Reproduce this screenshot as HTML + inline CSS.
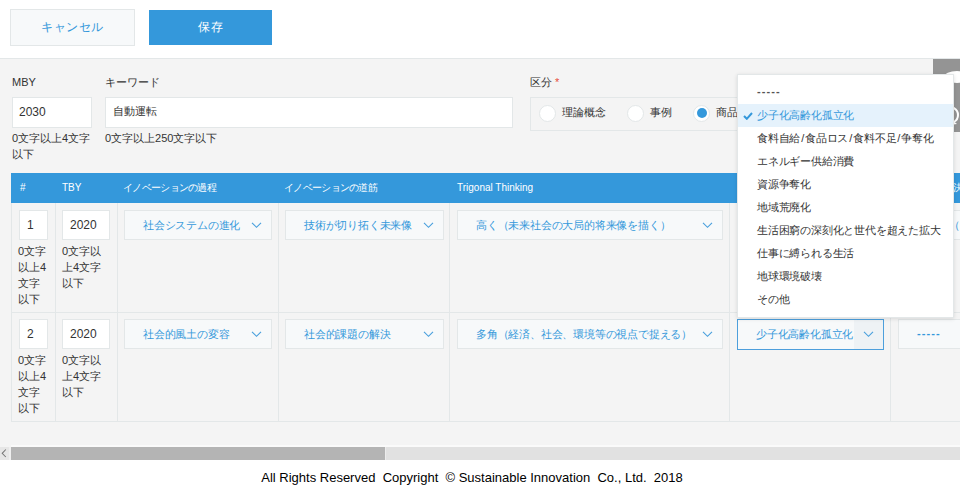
<!DOCTYPE html>
<html><head><meta charset="utf-8">
<style>
*{box-sizing:border-box;margin:0;padding:0}
html,body{width:960px;height:493px;overflow:hidden;background:#fff;font-family:"Liberation Sans",sans-serif;color:#333;white-space:nowrap}
.a{position:absolute}
.btn{position:absolute;text-align:center;font-size:12px;letter-spacing:0.5px}
.cancel{left:10px;top:9px;width:125px;height:37px;background:#f7f9fa;border:1px solid #e3e7e8;color:#3498db;line-height:35px}
.save{left:149px;top:10px;width:123px;height:35px;background:#3498db;color:#fff;line-height:35px}
.main{left:0;top:58px;width:960px;height:389px;background:#f4f4f4;border-top:1px solid #e3e7e8}
.lbl{position:absolute;font-size:11px;color:#333;line-height:16px}
.inp{position:absolute;background:#fff;border:1px solid #e3e7e8;font-size:12px;color:#333;line-height:28px}
.help{position:absolute;font-size:11px;line-height:16px;color:#333}
.hdr{left:11px;top:173px;width:949px;height:30px;background:#3498db}
.hdr span{position:absolute;top:0;line-height:30px;color:#fff;font-size:10px}
.hdr .j{letter-spacing:-0.7px}
.sel{position:absolute;height:30px;background:#f7f9fa;border:1px solid #e3e7e8;color:#3498db;font-size:11px;letter-spacing:-0.2px;line-height:28px;padding-left:18px;overflow:hidden}
.sel svg{position:absolute;right:9px;top:11px}
.vl{position:absolute;width:1px;background:#e3e7e8}
.hl{position:absolute;height:1px;background:#e3e7e8}
.radio{position:absolute;width:17px;height:17px;border-radius:50%;background:#fff;border:1px solid #e3e7e8}
.rt{position:absolute;font-size:11px;line-height:16px;top:104px}
.dd{left:737px;top:74px;width:217px;height:244px;background:#fff;border:1px solid #e3e7e8;box-shadow:0 1px 4px rgba(0,0,0,.12);padding-top:6px}
.dd div{height:23px;line-height:23px;padding-left:19px;font-size:11px;letter-spacing:-0.2px;color:#333;position:relative}
.dd .on{background:#e5f2fc;color:#3498db}
</style></head><body>
<div class="btn cancel">キャンセル</div>
<div class="btn save">保存</div>
<div class="a main"></div>

<div class="lbl" style="left:12px;top:74px">MBY</div>
<div class="inp" style="left:12px;top:97px;width:80px;height:31px;padding-left:6px;line-height:29px">2030</div>
<div class="help" style="left:12px;top:130px">0文字以上4文字<br>以下</div>

<div class="lbl" style="left:105px;top:74px">キーワード</div>
<div class="inp" style="left:105px;top:97px;width:408px;height:31px;padding-left:6.5px;line-height:27px;font-size:11px">自動運転</div>
<div class="help" style="left:105px;top:130px">0文字以上250文字以下</div>

<div class="lbl" style="left:530px;top:74px">区分 <span style="color:#e74c3c">*</span></div>
<div class="a" style="left:530px;top:97px;width:420px;height:34px;border:1px solid #e3e7e8"></div>
<div class="radio" style="left:539px;top:104.5px"></div><div class="rt" style="left:562px">理論概念</div>
<div class="radio" style="left:627px;top:104.5px"></div><div class="rt" style="left:650px">事例</div>
<div class="radio" style="left:693px;top:104.5px"></div><div class="a" style="left:696.5px;top:108px;width:10px;height:10px;border-radius:50%;background:#3498db"></div><div class="rt" style="left:716px">商品</div>

<!-- right gray tool -->
<div class="a" style="left:933px;top:59px;width:27px;height:73px;background:#949494"></div>
<div class="a" style="left:944px;top:71px;width:26px;height:12px;border-radius:50%;background:#fff"></div>
<svg class="a" style="left:938px;top:103px" width="22" height="24" viewBox="0 0 22 24"><path d="M4 12 A8 8 0 1 1 16 19" fill="none" stroke="#fff" stroke-width="2"/><path d="M13 16 L19 21 L12 22 Z" fill="#fff"/></svg>

<!-- table -->
<div class="a hdr">
<span style="left:9px">#</span>
<span style="left:51px">TBY</span>
<span class="j" style="left:112px">イノベーションの過程</span>
<span class="j" style="left:273px">イノベーションの道筋</span>
<span style="left:446px">Trigonal Thinking</span>
<span class="j" style="left:728px">社会課題</span>
<span class="j" style="left:933px">解決</span>
</div>
<div class="vl" style="left:11px;top:203px;height:219px"></div>
<div class="vl" style="left:55px;top:203px;height:219px"></div>
<div class="vl" style="left:117px;top:203px;height:219px"></div>
<div class="vl" style="left:278px;top:203px;height:219px"></div>
<div class="vl" style="left:449px;top:203px;height:219px"></div>
<div class="vl" style="left:729px;top:203px;height:219px"></div>
<div class="vl" style="left:890px;top:203px;height:219px"></div>
<div class="hl" style="left:11px;top:312px;width:949px"></div>
<div class="hl" style="left:11px;top:421px;width:949px"></div>

<!-- row 1 -->
<div class="inp" style="left:19px;top:210px;width:29px;height:30px;padding-left:7px">1</div>
<div class="help" style="left:18px;top:243px">0文字<br>以上4<br>文字<br>以下</div>
<div class="inp" style="left:62px;top:210px;width:48px;height:30px;padding-left:7px">2020</div>
<div class="help" style="left:62px;top:243px">0文字以<br>上4文字<br>以下</div>
<div class="sel" style="left:124px;top:210px;width:148px">社会システムの進化<svg width="11" height="7" viewBox="0 0 11 7"><path d="M1 0.8 L5.5 5.3 L10 0.8" fill="none" stroke="#4aa0dd" stroke-width="1.15"/></svg></div>
<div class="sel" style="left:285px;top:210px;width:159px">技術が切り拓く未来像<svg width="11" height="7" viewBox="0 0 11 7"><path d="M1 0.8 L5.5 5.3 L10 0.8" fill="none" stroke="#4aa0dd" stroke-width="1.15"/></svg></div>
<div class="sel" style="left:457px;top:210px;width:266px">高く（未来社会の大局的将来像を描く）<svg width="11" height="7" viewBox="0 0 11 7"><path d="M1 0.8 L5.5 5.3 L10 0.8" fill="none" stroke="#4aa0dd" stroke-width="1.15"/></svg></div>
<div class="sel" style="left:898px;top:210px;width:150px">俯瞰的（未来</div>

<!-- row 2 -->
<div class="inp" style="left:19px;top:319px;width:29px;height:30px;padding-left:7px">2</div>
<div class="help" style="left:18px;top:352px">0文字<br>以上4<br>文字<br>以下</div>
<div class="inp" style="left:62px;top:319px;width:48px;height:30px;padding-left:7px">2020</div>
<div class="help" style="left:62px;top:352px">0文字以<br>上4文字<br>以下</div>
<div class="sel" style="left:124px;top:319px;width:148px">社会的風土の変容<svg width="11" height="7" viewBox="0 0 11 7"><path d="M1 0.8 L5.5 5.3 L10 0.8" fill="none" stroke="#4aa0dd" stroke-width="1.15"/></svg></div>
<div class="sel" style="left:285px;top:319px;width:159px">社会的課題の解決<svg width="11" height="7" viewBox="0 0 11 7"><path d="M1 0.8 L5.5 5.3 L10 0.8" fill="none" stroke="#4aa0dd" stroke-width="1.15"/></svg></div>
<div class="sel" style="left:457px;top:319px;width:266px">多角（経済、社会、環境等の視点で捉える）<svg width="11" height="7" viewBox="0 0 11 7"><path d="M1 0.8 L5.5 5.3 L10 0.8" fill="none" stroke="#4aa0dd" stroke-width="1.15"/></svg></div>
<div class="sel" style="left:737px;top:319px;width:147px;height:31px;border-color:#4d9fdc"><div class="a" style="left:116px;top:0;width:30px;height:29px;background:#eef2f5"></div><span style="position:relative">少子化高齢化孤立化</span><svg width="11" height="7" viewBox="0 0 11 7"><path d="M1 0.8 L5.5 5.3 L10 0.8" fill="none" stroke="#4aa0dd" stroke-width="1.15"/></svg></div>
<div class="sel" style="left:898px;top:319px;width:150px;letter-spacing:1.1px;font-weight:bold"><span style="position:relative;top:-1px">-----</span></div>

<!-- dropdown -->
<div class="a dd">
<div style="letter-spacing:1.1px;font-weight:bold;color:#555"><span style="position:relative;top:-1.5px">-----</span></div>
<div class="on"><svg style="position:absolute;left:5px;top:8px" width="10" height="8" viewBox="0 0 10 8"><path d="M1 4 L3.8 6.8 L9 1" fill="none" stroke="#3498db" stroke-width="2"/></svg>少子化高齢化孤立化</div>
<div>食料自給<span style="padding:0 1px">/</span>食品ロス<span style="padding:0 1px">/</span>食料不足<span style="padding:0 1px">/</span>争奪化</div>
<div>エネルギー供給消費</div>
<div>資源争奪化</div>
<div>地域荒廃化</div>
<div>生活困窮の深刻化と世代を超えた拡大</div>
<div>仕事に縛られる生活</div>
<div>地球環境破壊</div>
<div>その他</div>
</div>

<!-- scrollbar -->
<div class="a" style="left:0;top:447px;width:960px;height:13px;background:#e1e1e1"></div>
<div class="a" style="left:0;top:447px;width:9px;height:13px;background:#e6e6e6"></div><div class="a" style="left:9px;top:447px;width:2px;height:13px;background:#efefef"></div>
<svg class="a" style="left:0;top:447px" width="10" height="13" viewBox="0 0 10 13"><path d="M5.8 2.5 L2.2 6.3 L5.8 10" fill="none" stroke="#777" stroke-width="1.05"/></svg>
<div class="a" style="left:11px;top:447px;width:374px;height:13px;background:#b4b4b4"></div>
<div class="a" style="left:385px;top:447px;width:1px;height:13px;background:#ececec"></div>
<div class="a" style="left:11px;top:445px;width:949px;height:2px;background:#fafafa"></div>

<!-- footer -->
<div class="a" style="left:0;top:468px;width:960px;text-align:center;font-size:13px;color:#000;line-height:20px;margin-left:-8px">All Rights Reserved&nbsp; Copyright&nbsp; © Sustainable Innovation&nbsp; Co., Ltd.&nbsp; 2018</div>
</body></html>
